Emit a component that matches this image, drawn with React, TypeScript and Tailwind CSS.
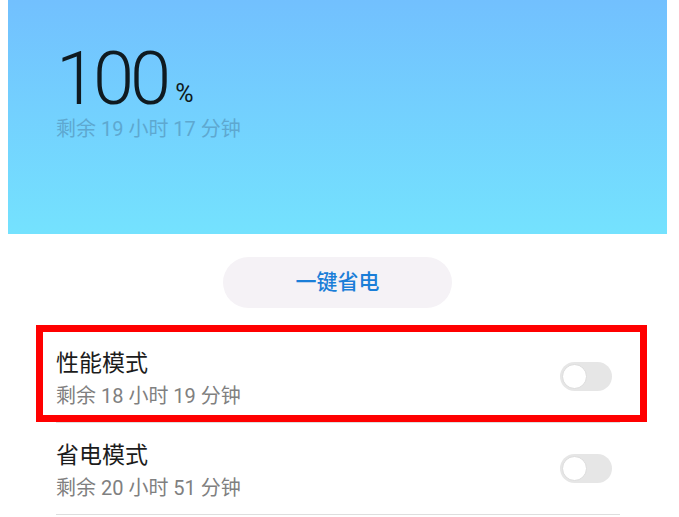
import React from "react";

const font = { fontFamily: 'Roboto, "Noto Sans CJK SC", sans-serif' };

function Toggle() {
  return (
    <div className="w-[52px] h-[29px] rounded-full bg-[#e6e6e6] flex items-center px-[2px]">
      <div className="w-[25px] h-[25px] rounded-full bg-white border border-[#dcdcdc]" />
    </div>
  );
}

function Row({ title, sub }: { title: string; sub: string }) {
  return (
    <div className="h-[92px] border-b border-[#dedede] flex items-center justify-between">
      <div className="flex flex-col pt-[5px]">
        <div className="text-[23px] leading-[30px] text-[#1c1c1c]">{title}</div>
        <div className="text-[20px] leading-[28px] mt-[3px] text-[#808080]">{sub}</div>
      </div>
      <div className="mr-[8px]">
        <Toggle />
      </div>
    </div>
  );
}

export default function App() {
  return (
    <div className="w-[679px] h-[517px] bg-white overflow-hidden" style={font}>
      <div className="ml-[8px] w-[659px] h-[234px] bg-gradient-to-b from-[#72c0fe] to-[#74e2fe] pl-[48px] pt-[42px]">
        <div className="flex items-end">
          <span className="text-[74px] leading-[74px] font-light tracking-[-4px] text-[#0f1a20]">100</span>
          <span className="text-[25px] leading-[26px] mb-[9px] ml-[8px] text-[#0f1a20]">%</span>
        </div>
        <div className="text-[20px] leading-[26px] text-[#5ea8d0]">剩余 19 小时 17 分钟</div>
      </div>
      <div className="ml-[223px] mt-[23px] w-[229px] h-[51px] rounded-full bg-[#f5f2f6] flex items-center justify-center">
        <span className="text-[21px] font-medium text-[#1a7ed8]">一键省电</span>
      </div>
      <div className="ml-[56px] w-[564px] mt-[23px]">
        <div className="relative">
          <Row title="性能模式" sub="剩余 18 小时 19 分钟" />
          <div className="absolute left-[-20px] right-[-27px] top-[-6px] bottom-[1px] border-[7px] border-[#ff0000]" />
        </div>
        <Row title="省电模式" sub="剩余 20 小时 51 分钟" />
      </div>
    </div>
  );
}
